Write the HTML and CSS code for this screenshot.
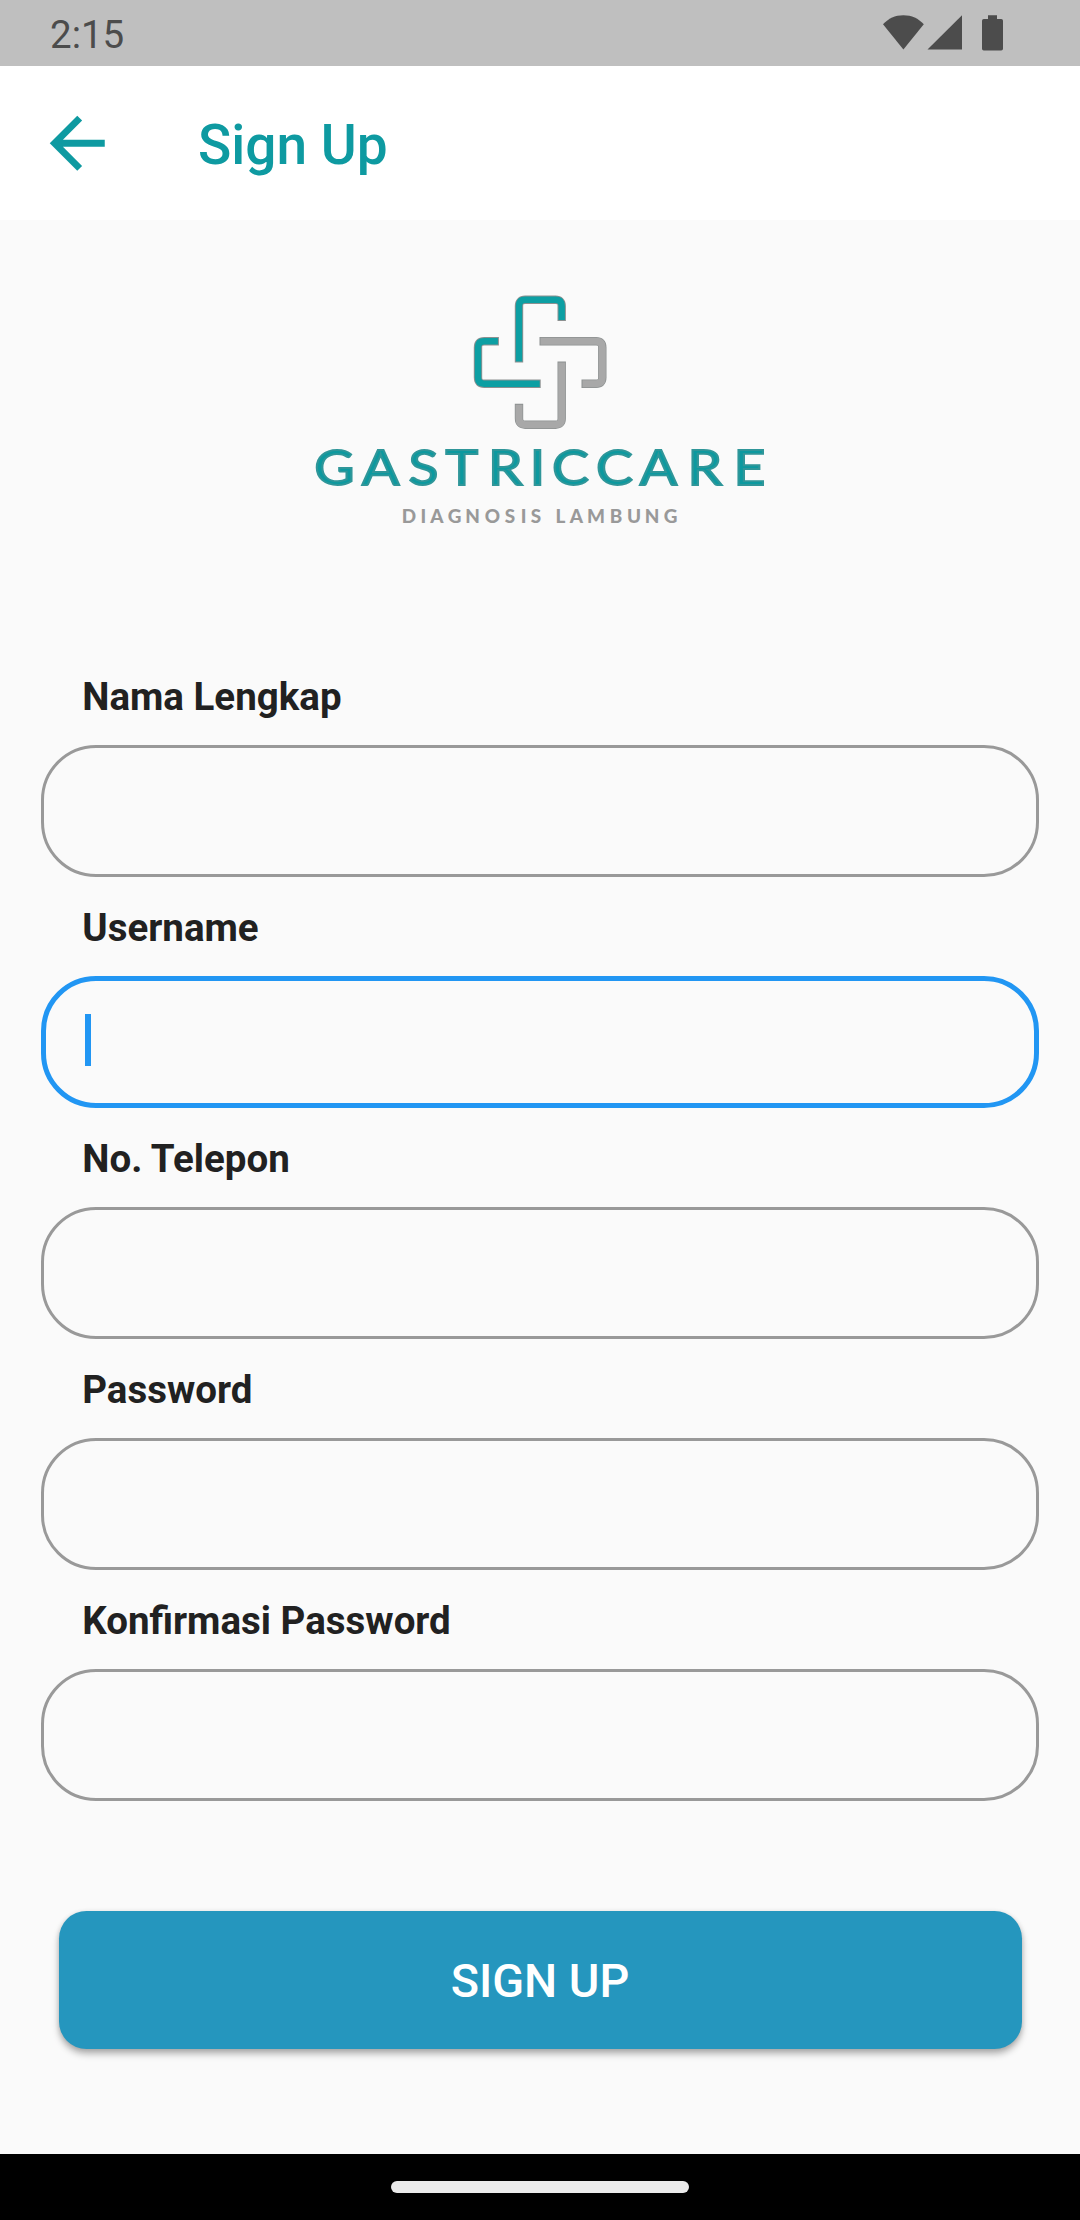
FILE: index.html
```html
<!DOCTYPE html>
<html lang="id">
<head>
<meta charset="utf-8">
<title>Sign Up</title>
<link rel="stylesheet" href="styles.css">
</head>
<body>
<div class="screen">
  <div class="status-bar">
    <span class="clock">2:15</span>
    <svg class="status-icons" width="122" height="38" viewBox="882 14 122 38" aria-hidden="true">
      <path d="M883 24.3C888.5 18.5 895 15.3 903.4 15.3S918.3 18.5 923.8 24.3L903.4 49.5Z"/>
      <path d="M927.5 49.5L962 15.3V49.5Z"/>
      <path d="M988 15.3h9V19h4.200a1.800 1.800 0 0 1 1.800 1.800v28a1.800 1.800 0 0 1-1.800 1.800h-17.400a1.800 1.800 0 0 1-1.800-1.800v-28a1.800 1.800 0 0 1 1.800-1.800H988Z"/>
    </svg>
  </div>
  <header class="app-bar">
    <svg class="back" viewBox="0 0 24 24" aria-hidden="true"><path d="M20 11H7.830l5.590-5.590L12 4l-8 8 8 8 1.410-1.410L7.830 13H20v-2z"/></svg>
    <h1 class="title">Sign Up</h1>
  </header>
  <main class="content">
    <svg class="logo" width="480" height="250" viewBox="300 284 480 250" role="img" aria-label="Gastriccare">
      <g class="mark-edge">
        <path d="M519 362.600V306q0-6.200 6.200-6.200h30.300q6.200 0 6.200 6.200v15"/>
        <path d="M498.900 341.200H484.200q-6.200 0-6.200 6.200v30.200q0 6.200 6.200 6.200H540.700"/>
        <path d="M539.500 341.200H596.100q6.200 0 6.200 6.200v30.200q0 6.200-6.200 6.200H581.500"/>
        <path d="M561.700 361.500V418.500q0 6.200-6.200 6.200H525.200q-6.200 0-6.200-6.200V403.700"/>
      </g>
      <g class="mark-teal">
        <path d="M519 361.600V306q0-6.200 6.200-6.200h30.300q6.200 0 6.200 6.200v14"/>
        <path d="M497.900 341.200H484.200q-6.200 0-6.200 6.200v30.200q0 6.200 6.200 6.200H539.700"/>
      </g>
      <g class="mark-gray">
        <path d="M540.500 341.200H596.100q6.200 0 6.200 6.200v30.200q0 6.200-6.200 6.200H582.500"/>
        <path d="M561.700 362.500V418.500q0 6.200-6.200 6.200H525.200q-6.200 0-6.200-6.200V404.700"/>
      </g>
      <text class="brand" transform="scale(1.150 1)" y="485" x="290.900 331 368.300 401.500 439.300 467.400 496 534.300 572.600 612.900 651.800">GASTRICCARE</text>
      <text class="tagline" transform="scale(1.050 1)" y="522.700" x="389.500 403.300 416.200 432.900 450 469 485.700 498.600 510.500 522 533.800 549 567.600 586.700 603.800 621 638.600">DIAGNOSIS LAMBUNG</text>
    </svg>
    <form class="form">
      <label class="field"><span class="label">Nama Lengkap</span><span class="box"></span></label>
      <label class="field"><span class="label">Username</span><span class="box focused"><span class="caret"></span></span></label>
      <label class="field"><span class="label">No. Telepon</span><span class="box"></span></label>
      <label class="field"><span class="label">Password</span><span class="box"></span></label>
      <label class="field"><span class="label">Konfirmasi Password</span><span class="box"></span></label>
      <button class="submit" type="button">SIGN UP</button>
    </form>
  </main>
  <div class="nav-bar"><div class="handle"></div></div>
</div>
</body>
</html>
```

FILE: styles.css
```css
* { box-sizing: border-box; }
body { margin: 0; font-family: Roboto, "Liberation Sans", sans-serif; }
.screen { width: 1080px; height: 2220px; display: flex; flex-direction: column; background: #fafafa; }

.status-bar { height: 66px; flex: none; display: flex; justify-content: space-between; align-items: flex-start; padding: 14px 76px 0 50px; background: #bfbfbf; color: #4c4c4c; }
.clock { font-size: 38.5px; line-height: 42px; }
.status-icons { fill: #4c4c4c; }

.app-bar { height: 154px; flex: none; display: flex; align-items: center; padding-left: 36px; background: #fff; color: #0e9aa1; }
.back { width: 82.5px; height: 82.5px; fill: currentColor; margin-bottom: 0.5px; }
.title { margin: 4px 0 0 79.5px; font-size: 55px; font-weight: 500; line-height: 64px; }

.content { flex: 1; display: flex; flex-direction: column; align-items: center; padding-top: 64px; }
.logo { display: block; }
.mark-edge path, .mark-teal path, .mark-gray path { fill: none; }
.mark-edge { stroke: #8c9090; stroke-width: 8.4px; }
.mark-teal { stroke: #0c9fa3; stroke-width: 6.4px; }
.mark-gray { stroke: #a8a8a8; stroke-width: 7px; }
.brand, .tagline { font-family: Lato, sans-serif; text-anchor: middle; }
.brand { font-size: 48px; font-weight: 400; fill: #0c999f; stroke: #2f9699; stroke-width: 1.9px; }
.tagline { font-size: 18px; font-weight: 900; fill: #999; }

.form { width: 997.5px; margin-top: 128px; }
.field { display: block; height: 231px; }
.label { display: block; height: 83px; padding: 12px 0 0 41px; color: #212121; font-size: 38.5px; font-weight: 700; line-height: 46px; }
.box { display: flex; align-items: center; height: 132px; border: 3px solid #999; border-radius: 55px; }
.focused { border: 5.5px solid #2196f3; padding-left: 38.5px; }
.caret { width: 6px; height: 52px; margin-bottom: 5px; background: #2196f3; }
.submit { display: block; width: 963px; height: 138px; margin: 94px auto 0; padding: 2px 0 0; border: 0; border-radius: 27.5px; background: #2596be; color: #fff; font: 500 46.75px/136px Roboto, sans-serif; box-shadow: 0 5px 7px rgba(0,0,0,.28), 0 1px 5px rgba(0,0,0,.12); }

.nav-bar { height: 66px; flex: none; display: flex; justify-content: center; align-items: center; background: #000; }
.handle { width: 298px; height: 12px; border-radius: 6px; background: #ebebeb; }
```
